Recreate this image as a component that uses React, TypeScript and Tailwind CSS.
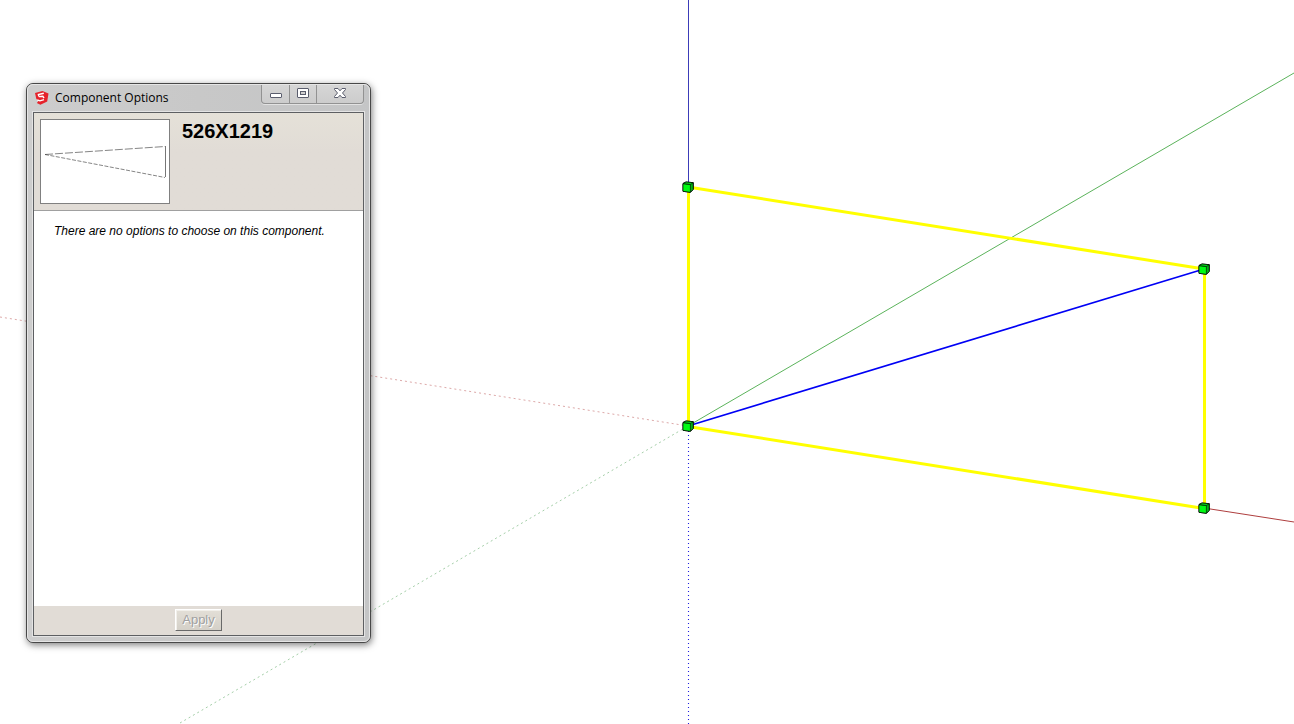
import React from "react";

type Point = { x: number; y: number };

const handles: Point[] = [
  { x: 688, y: 187 },
  { x: 688, y: 426 },
  { x: 1204, y: 269 },
  { x: 1204, y: 508 },
];

function Handle({ x, y }: Point) {
  return (
    <g transform={`translate(${x} ${y})`} stroke="#000" strokeWidth="1" strokeLinejoin="round">
      <path d="M-5 -3.5 L-2 -5 L5.3 -4.3 L5.3 2.5 L2.5 5.3 L-5 4.3 Z" fill="#00b414" />
      <path d="M-5 -3.3 L2.4 -2.5 L2.4 5.3 L-5 4.3 Z" fill="#00fa14" strokeWidth="0.6" />
      <path d="M-5 -3.5 L-2 -5 L5.3 -4.3 L2.4 -2.5 Z" fill="#00dc18" strokeWidth="0.6" />
    </g>
  );
}

function Viewport() {
  return (
    <svg
      className="absolute inset-0 h-full w-full"
      viewBox="0 0 1294 724"
      preserveAspectRatio="xMinYMin slice"
      role="img"
      aria-label="Model view with drawing axes"
      fill="none"
    >
      <path d="M0 317 L688 426" stroke="#dda9a9" strokeDasharray="2 3" />
      <path d="M180 723 L688 426" stroke="#a5cfa9" strokeDasharray="2 3" />
      <path d="M688.5 427 V724" stroke="#2020e0" strokeWidth="1.1" strokeDasharray="1.1 2.9" />
      <path d="M688.5 0 V187" stroke="#3c3cb8" />
      <path d="M688 426 L1294 73" stroke="#5bb35b" />
      <path d="M1204 508 L1294 522" stroke="#ae3e3e" />
      <path d="M688 187 L1204 269 M688 426.5 L1204 508.5" stroke="#ffff00" strokeWidth="3" />
      <path d="M688.5 187 V426 M1204.5 269 V508" stroke="#ffff00" strokeWidth="3" />
      <path d="M688 426 L1204 269" stroke="#0000f5" strokeWidth="1.7" />
      {handles.map((p) => (
        <Handle key={`${p.x}-${p.y}`} x={p.x} y={p.y} />
      ))}
    </svg>
  );
}

function AppIcon() {
  return (
    <svg className="h-4 w-4 shrink-0" viewBox="0 0 16 16" aria-hidden="true">
      <path d="M1 3 L8.5 1 L14.5 3.4 L13.2 11.4 L6.4 14.8 L2.8 13 L4.2 11.4 L2.2 8.4 Z" fill="#e6222b" />
      <path
        d="M9.8 3.2 L4.4 4.6 L4.8 6.4 M4.8 6.6 L8.8 6.2 L10 8.2 M10 9.6 L6 10.8 L3.2 10"
        fill="none"
        stroke="#fff"
        strokeWidth="1.4"
      />
    </svg>
  );
}

function WindowButtons() {
  return (
    <div className="mr-px flex h-[19px] self-start overflow-hidden rounded-b border border-t-0 border-[#929292] bg-gradient-to-b from-[#d6d6d6] to-[#cccccc] shadow-[0_1px_0_#e2e2e2]">
      <button type="button" aria-label="Minimize" className="flex w-7 items-center justify-center border-r border-[#929292]">
        <svg width="14" height="12" viewBox="0 0 14 12" aria-hidden="true">
          <rect x="1.5" y="5.5" width="11" height="4" rx="0.5" fill="#fff" stroke="#5a5d6d" />
        </svg>
      </button>
      <button type="button" aria-label="Maximize" className="flex w-[27px] items-center justify-center border-r border-[#929292]">
        <svg width="14" height="12" viewBox="0 0 14 12" aria-hidden="true">
          <rect x="1.5" y="0.5" width="11" height="9" rx="0.5" fill="#fff" stroke="#5a5d6d" />
          <rect x="4.5" y="3.5" width="5" height="3" fill="#d0d0d0" stroke="#5a5d6d" />
        </svg>
      </button>
      <button type="button" aria-label="Close" className="flex w-[46px] items-center justify-center">
        <svg width="14" height="12" viewBox="0 0 14 12" aria-hidden="true">
          <path
            d="M1.5 0.5 H5 L7 2.8 L9 0.5 H12.5 V1.5 L9.5 5 L12.5 8.5 V9.5 H9 L7 7.2 L5 9.5 H1.5 V8.5 L4.5 5 L1.5 1.5 Z"
            fill="#fff"
            stroke="#5a5d6d"
          />
        </svg>
      </button>
    </div>
  );
}

function ComponentPreview() {
  return (
    <svg
      className="h-[85px] w-[130px] shrink-0 border border-[#808080] bg-white"
      viewBox="0 0 128 83"
      role="img"
      aria-label="Component preview"
      fill="none"
      stroke="#333"
    >
      <path d="M4 34.5 L124 26.5" strokeWidth="0.6" strokeDasharray="8 2" />
      <path d="M4 34.5 L124 57.5" strokeWidth="0.6" strokeDasharray="4 1.5" />
      <path d="M124.5 26 V57" stroke="#777" />
    </svg>
  );
}

export default function App() {
  return (
    <main className="relative min-h-screen overflow-hidden bg-white pl-[26px] pt-[83px] font-['Liberation_Sans',sans-serif] text-black">
      <Viewport />
      <section
        aria-labelledby="window-title"
        className="relative w-[345px] rounded-[7px] border border-[#484848] bg-[#c4c5c6] shadow-[1px_2px_7px_rgba(0,0,0,0.5)]"
      >
        <div className="rounded-md border border-[#e6e6e6] bg-gradient-to-r from-[#cdcdcd] via-[#c8c8c8] to-[#c4c5c6] px-1 pb-1">
          <header className="flex h-[26px] items-center justify-between pl-0.5">
            <div className="flex items-center gap-[5px]">
              <AppIcon />
              <h1 id="window-title" className="font-['Open_Sans',sans-serif] text-[12px] leading-4">
                Component Options
              </h1>
            </div>
            <WindowButtons />
          </header>
          <div className="border border-[#e4e4e4]">
            <div className="border border-[#5d5f62] bg-white">
              <div className="flex gap-3 border-b border-[#a0a0a0] bg-gradient-to-b from-[#e5e1d8] to-[#e1dcd6] to-40% p-1.5">
                <ComponentPreview />
                <h2 className="text-[20px] font-bold leading-6">526X1219</h2>
              </div>
              <p className="h-[395px] px-5 pt-3 text-[12px] italic leading-4">
                There are no options to choose on this component.
              </p>
              <footer className="flex justify-center bg-[#e1dcd6] pb-1 pt-[3px]">
                <button
                  type="button"
                  disabled
                  className="h-[22px] border border-b-[#696969] border-l-white border-r-[#696969] border-t-white bg-gradient-to-b from-[#e3dfd7] to-[#d4d0c8] px-1.5 text-[13px] leading-5 text-[#a0a0a0] shadow-[inset_1px_1px_0_#f2f0eb] [text-shadow:1px_1px_0_#fff]"
                >
                  Apply
                </button>
              </footer>
            </div>
          </div>
        </div>
      </section>
    </main>
  );
}
